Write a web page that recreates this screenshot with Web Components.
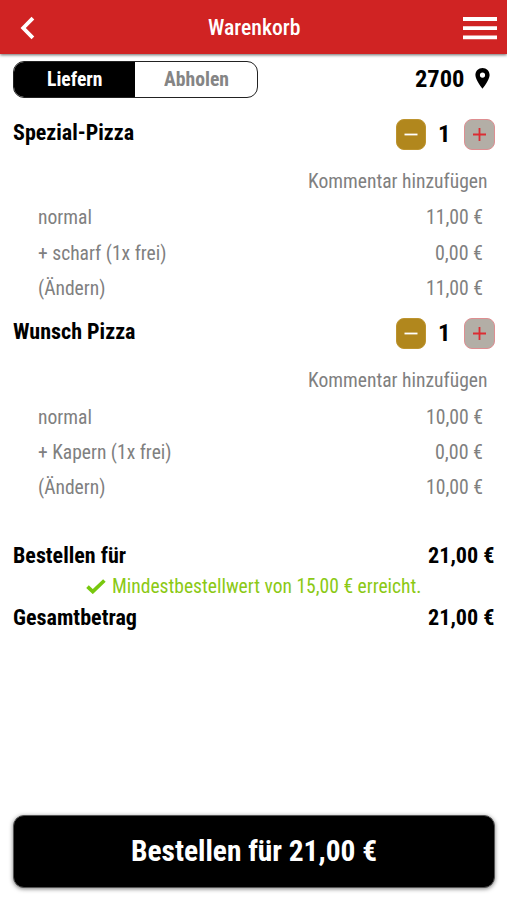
<!DOCTYPE html>
<html lang="de">
<head>
<meta charset="utf-8">
<title>Warenkorb</title>
<style>
html,body{margin:0;padding:0;background:#fff}
body{font-family:"Roboto Condensed",Roboto,"Liberation Sans Narrow",sans-serif;font-stretch:75%}
</style>
</head>
<body>
<cart-page></cart-page>
<script>
// Single line of text, condensed horizontally to the width given in "w".
class FitText extends HTMLElement{
  connectedCallback(){
    const r=this.attachShadow({mode:'open'});
    const w=+this.getAttribute('w');
    r.innerHTML=`<style>:host{display:block;flex:none;width:${w}px;white-space:nowrap}
    span{display:inline-block;transform-origin:0 50%}</style><span></span>`;
    const s=r.querySelector('span');
    s.textContent=this.getAttribute('text');
    s.style.transform=`scaleX(${w/s.getBoundingClientRect().width})`;
  }
}
customElements.define('fit-text',FitText);

function define(name,html){
  const t=document.createElement('template');
  t.innerHTML=html;
  customElements.define(name,class extends HTMLElement{
    connectedCallback(){this.attachShadow({mode:'open'}).append(t.content.cloneNode(true));}
  });
}

define('app-header',`<style>
:host{display:flex;box-sizing:border-box;height:54px;padding:0 10px 0 20px;align-items:center;justify-content:space-between;background:#d02323;color:#fff;box-shadow:0 1px 3px rgba(0,0,0,.6);font-size:22.5px;font-weight:500;line-height:56px}
svg{display:block;flex:none;margin-top:2px}
</style>
<svg width="15" height="24" viewBox="0 0 15 24"><path d="M12.9 2.1 3.2 12l9.7 9.9" fill="none" stroke="#fff" stroke-width="3.8"/></svg>
<slot></slot>
<svg width="34" height="24" viewBox="0 0 34 24"><path d="M0 3h34M0 12.2h34M0 21.4h34" stroke="#fff" stroke-width="3.8"/></svg>`);

define('mode-switch',`<style>
:host{display:flex;box-sizing:border-box;width:245px;height:37px;border:1px solid #222;border-radius:11px;overflow:hidden;font-size:20px;font-weight:700;line-height:35.5px}
div{display:flex;justify-content:center}
.a{width:121px;background:#000;color:#fff}
.b{flex:1;color:#858585}
</style>
<div class="a"><fit-text w="55.5" text="Liefern" style="margin-left:1px"></fit-text></div>
<div class="b"><fit-text w="65" text="Abholen"></fit-text></div>`);

define('postal-code',`<style>
:host{display:flex;align-items:center;gap:11px;font-size:24.5px;font-weight:700;line-height:36px;color:#000}
svg{display:block;margin-top:-1px}
fit-text{margin-top:-1px}
</style>
<fit-text w="49.5" text="2700"></fit-text>
<svg width="15" height="21" viewBox="0 0 15 21"><path fill="#000" fill-rule="evenodd" d="M7.5 0C3.4 0 .4 3.1.4 7.1c0 5.2 7.1 13.6 7.1 13.6s7.1-8.4 7.1-13.6C14.6 3.1 11.6 0 7.5 0Zm0 4.5a2.6 2.6 0 1 1 0 5.2 2.6 2.6 0 0 1 0-5.2Z"/></svg>`);

define('quantity-stepper',`<style>
:host{display:flex;align-items:center;font-size:24px;font-weight:700;line-height:31px}
.b{box-sizing:border-box;width:31px;height:31px;border-radius:8px;display:grid;place-items:center}
.m{width:30px;background:#b1871d;border:1px solid #bd942f}
.p{background:#b3aea6;border:1px solid #de8e91}
fit-text{margin:0 13.5px 0 12.5px}
svg{display:block}
</style>
<div class="b m"><svg width="14" height="15"><path d="M.5 7.5h13" stroke="#fff" stroke-width="1.8"/></svg></div>
<fit-text w="12.5" text="1"></fit-text>
<div class="b p"><svg width="15" height="15"><path d="M1 7.5h13M7.5 1v13" stroke="#dc2c32" stroke-width="1.8"/></svg></div>`);

// Left and right text on one line.
class PriceRow extends HTMLElement{
  connectedCallback(){
    const g=n=>this.getAttribute(n);
    this.attachShadow({mode:'open'}).innerHTML=`<style>
    :host{display:flex;justify-content:space-between;height:35.4px;line-height:35.4px}
    </style><fit-text w="${g('lw')}" text="${g('label')}"></fit-text><fit-text w="${g('rw')}" text="${g('price')}"></fit-text>`;
  }
}
customElements.define('price-row',PriceRow);

define('cart-item',`<style>
:host{display:block;height:199.2px;color:#808080;font-size:20px}
.head{display:flex;justify-content:space-between;height:45px}
.name{display:block;color:#000;font-size:22px;font-weight:700;line-height:27px}
quantity-stepper{height:31px;color:#000}
.comment{display:flex;justify-content:flex-end;padding-right:7.5px;height:36.4px;line-height:35.8px}
.rows{padding:0 12.5px 0 24.5px}
</style>
<div class="head"><slot class="name" name="name"></slot><quantity-stepper></quantity-stepper></div>
<div class="comment"><fit-text w="179.5" text="Kommentar hinzufügen"></fit-text></div>
<div class="rows"><slot></slot></div>`);

define('min-order-note',`<style>
:host{display:flex;align-items:center;height:31px;line-height:31px;font-size:20px;color:#8bc914;padding-left:73px;gap:6px}
</style>
<svg width="20" height="15" viewBox="0 0 20 15"><path d="M1.5 7.6 6.8 12.6 18.4 1.5" fill="none" stroke="#78c80e" stroke-width="3.7"/></svg>
<fit-text w="309.5" text="Mindestbestellwert von 15,00 € erreicht."></fit-text>`);

define('order-button',`<style>
:host{display:flex;justify-content:center;box-sizing:border-box;height:73px;border-radius:11px;background:#000;color:#fff;border:1px solid #555;box-shadow:0 1px 4px rgba(0,0,0,.5);font-size:29.5px;font-weight:700;line-height:71px}
</style><fit-text w="246" text="Bestellen für 21,00 €"></fit-text>`);

define('cart-page',`<style>
:host{display:flex;flex-direction:column;height:900px;overflow:hidden;background:#fff}
.top{display:flex;justify-content:space-between;padding:7px 17px 0 13px;height:58px;box-sizing:border-box}
postal-code{height:36px}
.title{margin-left:11px}
.items{padding:7px 12px 0 13px}
.sum{padding:22.8px 12.5px 0 13px;color:#000;font-weight:700;font-size:22px}
.sum price-row{height:31px;line-height:31px}
min-order-note{font-weight:400}
order-button{margin:auto 12px 12.5px 13px}
</style>
<app-header><fit-text class="title" w="92.5" text="Warenkorb"></fit-text></app-header>
<div class="top"><mode-switch></mode-switch><postal-code></postal-code></div>
<div class="items">
<cart-item><fit-text slot="name" w="121" text="Spezial-Pizza"></fit-text>
<price-row label="normal" lw="54" price="11,00 €" rw="57"></price-row>
<price-row label="+ scharf (1x frei)" lw="128.5" price="0,00 €" rw="48"></price-row>
<price-row label="(Ändern)" lw="67.5" price="11,00 €" rw="57"></price-row></cart-item>
<cart-item><fit-text slot="name" w="122.5" text="Wunsch Pizza"></fit-text>
<price-row label="normal" lw="54" price="10,00 €" rw="57"></price-row>
<price-row label="+ Kapern (1x frei)" lw="133.5" price="0,00 €" rw="48"></price-row>
<price-row label="(Ändern)" lw="67.5" price="10,00 €" rw="57"></price-row></cart-item>
</div>
<div class="sum">
<price-row label="Bestellen für" lw="113" price="21,00 €" rw="66.5"></price-row>
<min-order-note></min-order-note>
<price-row label="Gesamtbetrag" lw="124" price="21,00 €" rw="66.5"></price-row>
</div>
<order-button></order-button>`);
</script>
</body>
</html>
